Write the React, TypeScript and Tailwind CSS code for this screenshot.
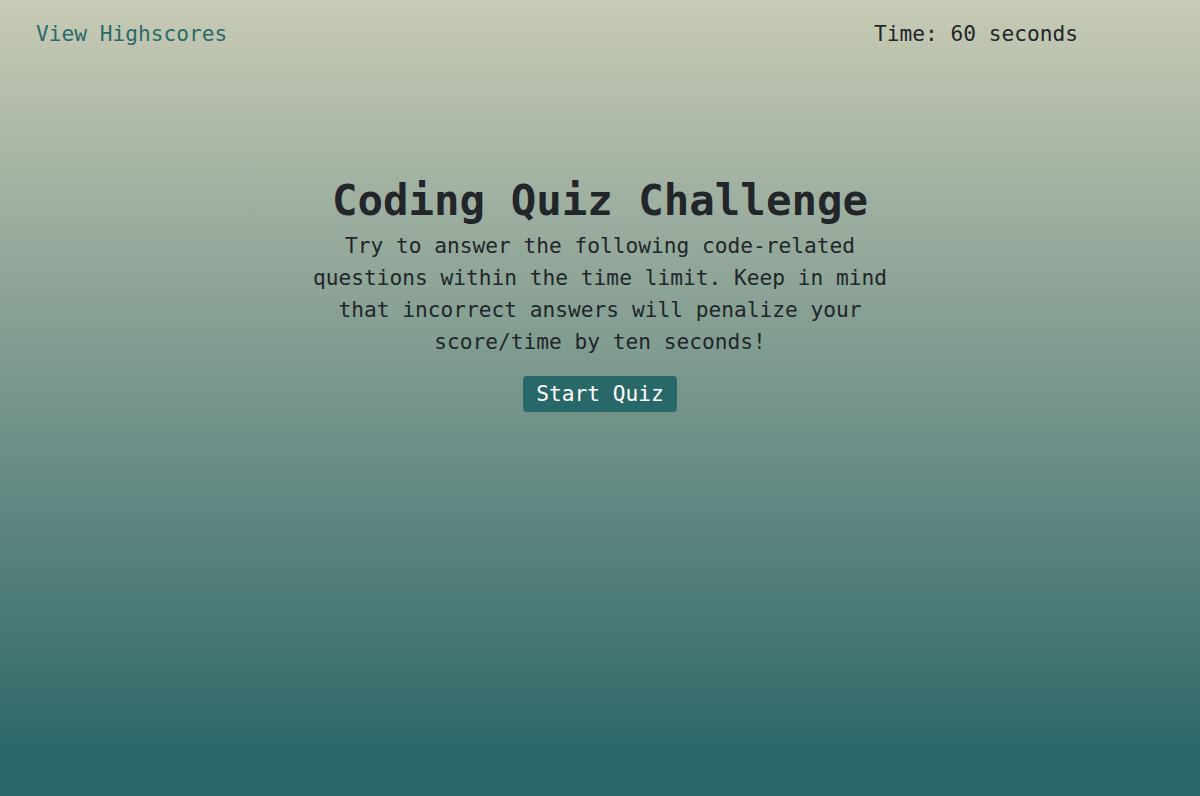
export default function App() {
  return (
    <div
      className="min-h-screen h-[796px] bg-linear-to-b from-[#c8cbb5] to-[#2a6768] to-95% pt-[1px] text-[#22262a]"
      style={{ fontFamily: '"DejaVu Sans Mono", "Liberation Mono", monospace' }}
    >
      <header className="flex h-[66px] items-center justify-between pl-9 pr-[122px] text-[21.2px]">
        <a href="#" className="text-[#2b6a6b]">
          View Highscores
        </a>
        <span>Time: 60 seconds</span>
      </header>

      <main className="flex flex-col items-center pt-[110px]">
        <h1 className="text-[42.4px] font-bold leading-[48px]">Coding Quiz Challenge</h1>
        <p className="mt-[5px] w-[600px] text-center text-[21.2px] leading-[32px]">
          Try to answer the following code-related questions within the time limit. Keep in mind
          that incorrect answers will penalize your score/time by ten seconds!
        </p>
        <button className="mt-[18px] h-[36px] rounded-[4px] bg-[#296868] px-[13px] text-[21.2px] text-white">
          Start Quiz
        </button>
      </main>
    </div>
  );
}
